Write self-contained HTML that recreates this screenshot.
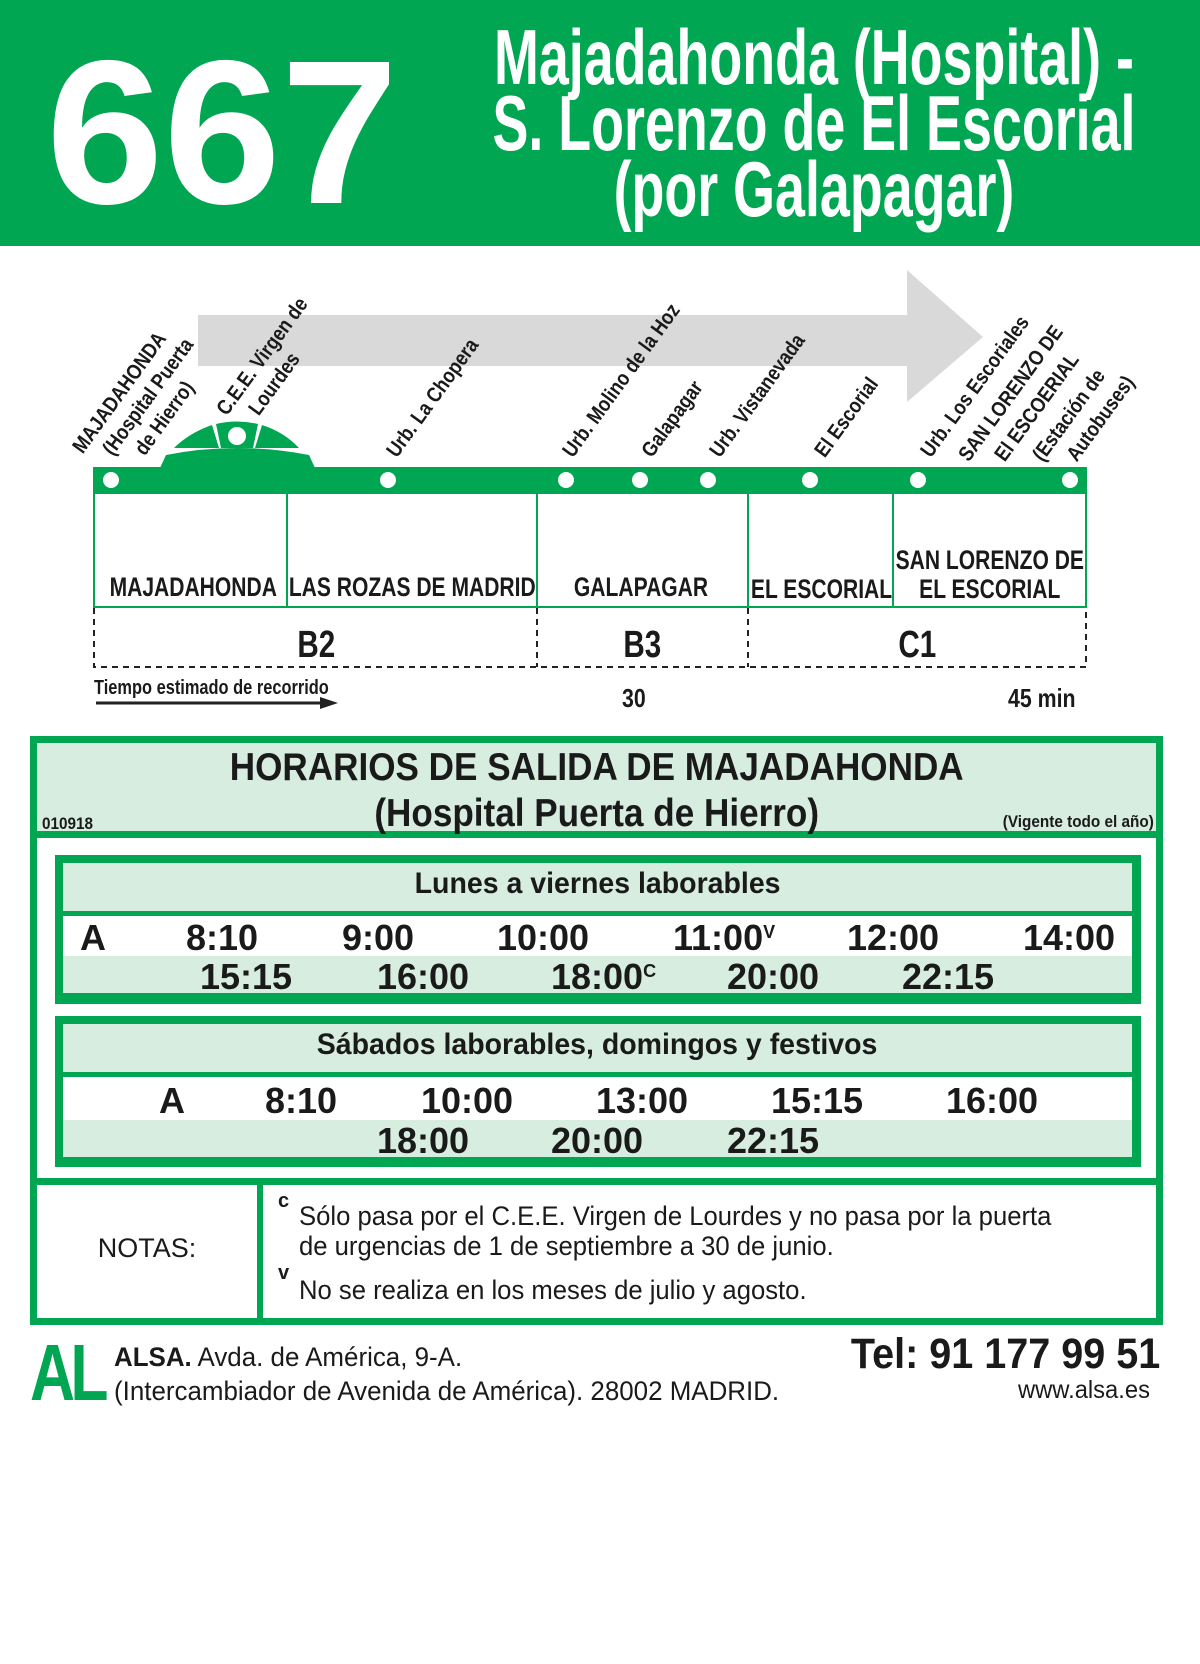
<!DOCTYPE html>
<html><head><meta charset="utf-8"><style>
*{margin:0;padding:0;box-sizing:border-box}
body{width:1200px;height:1664px;background:#fff;position:relative;overflow:hidden;font-family:"Liberation Sans",Arial,sans-serif;color:#1a1a1a}
.a{position:absolute;white-space:nowrap}
.c{display:inline-block;white-space:nowrap}
.lbl{position:absolute;font-weight:bold;font-size:21px;line-height:21px;height:21px;transform-origin:0 100%;transform:rotate(-54deg) scaleX(.86);white-space:nowrap;color:#1a1a1a}
.g{background:#00a651}
.lg{background:#d7ede0}
.t{position:absolute;font-weight:bold;font-size:36px;line-height:36px;white-space:nowrap}
.t sup{font-size:18px;position:relative;top:-6px;vertical-align:top}
.bx{position:absolute;font-weight:bold;font-size:27px;text-align:center;line-height:27px;white-space:nowrap;width:600px}
.bx span{display:inline-block;transform:scaleX(.78);white-space:nowrap}
</style></head><body>

<!-- Header -->
<div class="a g" style="left:0;top:0;width:1200px;height:246px"></div>
<div class="a" style="left:46px;top:30px;font-weight:bold;font-size:205px;line-height:205px;color:#fff"><span class="c" style="transform:scaleX(1.03);transform-origin:0 0">667</span></div>
<div class="a" style="left:-200px;top:24px;width:2028px;text-align:center;color:#fff;font-weight:bold;font-size:78px;line-height:66px">
<span class="c" style="transform:scaleX(.69);transform-origin:50% 50%">Majadahonda (Hospital) -<br>S. Lorenzo de El Escorial<br>(por Galapagar)</span></div>

<!-- Arrow / diagram -->
<svg class="a" style="left:0;top:0" width="1200" height="720">
<polygon points="198,315 907,315 907,270 983,337 907,402 907,366 198,366" fill="#d9d9d9"/>
<g fill="#00a651">
<path d="M160,468 L166,455 Q237,441 309,455 L315,468 Z"/>
<path d="M174,448 Q189,433 212,425 L219,448 Z"/>
<path d="M216,424 Q237,419 258,424 L253,448 L221,448 Z"/>
<path d="M262,425 Q284,432 299,448 L255,448 Z"/>
</g>
<circle cx="237" cy="436" r="9" fill="#fff"/>
<rect x="93" y="467" width="994" height="26" fill="#00a651"/>
<g fill="#fff">
<circle cx="111" cy="480" r="8"/><circle cx="388" cy="480" r="8"/><circle cx="566" cy="480" r="8"/><circle cx="640" cy="480" r="8"/><circle cx="708" cy="480" r="8"/><circle cx="810" cy="480" r="8"/><circle cx="918" cy="480" r="8"/><circle cx="1070" cy="480" r="8"/>
</g>
<rect x="94" y="493" width="992" height="114" fill="none" stroke="#00a651" stroke-width="2"/>
<g stroke="#00a651" stroke-width="2"><line x1="287" y1="493" x2="287" y2="607"/><line x1="537" y1="493" x2="537" y2="607"/><line x1="748" y1="493" x2="748" y2="607"/><line x1="893" y1="493" x2="893" y2="607"/></g>
<g stroke="#222" stroke-width="2" stroke-dasharray="6,5" fill="none">
<polyline points="94,608 94,667 1086,667 1086,608"/>
<line x1="537" y1="608" x2="537" y2="667"/><line x1="748" y1="608" x2="748" y2="667"/></g>
<line x1="96" y1="703" x2="322" y2="703" stroke="#222" stroke-width="3"/>
<polygon points="320,697 338,703 320,709" fill="#222"/>
</svg>

<!-- rotated labels -->
<div class="lbl" style="left:86px;top:436px">MAJADAHONDA</div>
<div class="lbl" style="left:116px;top:438px">(Hospital Puerta</div>
<div class="lbl" style="left:148px;top:438px">de Hierro)</div>
<div class="lbl" style="left:230px;top:398px">C.E.E. Virgen de</div>
<div class="lbl" style="left:262px;top:398px">Lourdes</div>
<div class="lbl" style="left:400px;top:440px">Urb. La Chopera</div>
<div class="lbl" style="left:576px;top:440px">Urb. Molino de la Hoz</div>
<div class="lbl" style="left:655px;top:440px">Galapagar</div>
<div class="lbl" style="left:723px;top:440px">Urb. Vistanevada</div>
<div class="lbl" style="left:828px;top:440px">El Escorial</div>
<div class="lbl" style="left:934px;top:440px">Urb. Los Escoriales</div>
<div class="lbl" style="left:972px;top:444px">SAN LORENZO DE</div>
<div class="lbl" style="left:1008px;top:444px">El ESCOERIAL</div>
<div class="lbl" style="left:1046px;top:444px">(Estación de</div>
<div class="lbl" style="left:1080px;top:444px">Autobuses)</div>

<!-- box labels -->
<div class="bx" style="left:-107px;top:574px"><span>MAJADAHONDA</span></div>
<div class="bx" style="left:112px;top:574px"><span>LAS ROZAS DE MADRID</span></div>
<div class="bx" style="left:341px;top:574px"><span>GALAPAGAR</span></div>
<div class="bx" style="left:522px;top:576px"><span>EL ESCORIAL</span></div>
<div class="bx" style="left:690px;top:546px;line-height:29px"><span>SAN LORENZO DE<br>EL ESCORIAL</span></div>
<div class="bx" style="left:16px;top:626px;font-size:38px;line-height:38px"><span>B2</span></div>
<div class="bx" style="left:342px;top:626px;font-size:38px;line-height:38px"><span>B3</span></div>
<div class="bx" style="left:617px;top:626px;font-size:38px;line-height:38px"><span>C1</span></div>
<div class="a" style="left:94px;top:677px;font-weight:bold;font-size:20px"><span class="c" style="transform:scaleX(.82);transform-origin:0 0">Tiempo estimado de recorrido</span></div>
<div class="a" style="left:622px;top:683px;font-weight:bold;font-size:26px"><span class="c" style="transform:scaleX(.82);transform-origin:0 0">30</span></div>
<div class="a" style="left:1008px;top:683px;font-weight:bold;font-size:26px"><span class="c" style="transform:scaleX(.82);transform-origin:0 0">45 min</span></div>

<!-- Schedule outer -->
<div class="a g" style="left:30px;top:736px;width:1133px;height:589px"></div>
<div class="a lg" style="left:37px;top:743px;width:1119px;height:88px"></div>
<div class="a" style="left:37px;top:838px;width:1119px;height:340px;background:#fff"></div>
<div class="a" style="left:37px;top:1185px;width:220px;height:133px;background:#fff"></div>
<div class="a" style="left:263px;top:1185px;width:893px;height:133px;background:#fff"></div>

<div class="a" style="left:37px;top:745px;width:1119px;text-align:center;font-weight:bold;font-size:39px;line-height:46px"><span class="c" style="transform:scaleX(.9)">HORARIOS DE SALIDA DE MAJADAHONDA<br>(Hospital Puerta de Hierro)</span></div>
<div class="a" style="left:42px;top:814px;font-weight:bold;font-size:17px"><span class="c" style="transform:scaleX(.9);transform-origin:0 0">010918</span></div>
<div class="a" style="right:46px;top:812px;font-weight:bold;font-size:17px"><span class="c" style="transform:scaleX(.9);transform-origin:100% 0">(Vigente todo el año)</span></div>

<!-- box 1 -->
<div class="a g" style="left:55px;top:855px;width:1086px;height:149px"></div>
<div class="a lg" style="left:63px;top:863px;width:1069px;height:48px"></div>
<div class="a" style="left:63px;top:916px;width:1069px;height:40px;background:#fff"></div>
<div class="a lg" style="left:63px;top:956px;width:1069px;height:37px"></div>
<div class="a" style="left:63px;top:867px;width:1069px;text-align:center;font-weight:bold;font-size:30px"><span class="c" style="transform:scaleX(.95)">Lunes a viernes laborables</span></div>
<div class="t" style="left:80px;top:920px">A</div>
<div class="t" style="left:186px;top:920px">8:10</div>
<div class="t" style="left:342px;top:920px">9:00</div>
<div class="t" style="left:497px;top:920px">10:00</div>
<div class="t" style="left:673px;top:920px">11:00<sup>V</sup></div>
<div class="t" style="left:847px;top:920px">12:00</div>
<div class="t" style="left:1023px;top:920px">14:00</div>
<div class="t" style="left:200px;top:959px">15:15</div>
<div class="t" style="left:377px;top:959px">16:00</div>
<div class="t" style="left:551px;top:959px">18:00<sup>C</sup></div>
<div class="t" style="left:727px;top:959px">20:00</div>
<div class="t" style="left:902px;top:959px">22:15</div>

<!-- box 2 -->
<div class="a g" style="left:55px;top:1016px;width:1086px;height:151px"></div>
<div class="a lg" style="left:63px;top:1024px;width:1069px;height:48px"></div>
<div class="a" style="left:63px;top:1077px;width:1069px;height:43px;background:#fff"></div>
<div class="a lg" style="left:63px;top:1120px;width:1069px;height:37px"></div>
<div class="a" style="left:63px;top:1028px;width:1069px;text-align:center;font-weight:bold;font-size:30px"><span class="c" style="transform:scaleX(.95)">Sábados laborables, domingos y festivos</span></div>
<div class="t" style="left:159px;top:1083px">A</div>
<div class="t" style="left:265px;top:1083px">8:10</div>
<div class="t" style="left:421px;top:1083px">10:00</div>
<div class="t" style="left:596px;top:1083px">13:00</div>
<div class="t" style="left:771px;top:1083px">15:15</div>
<div class="t" style="left:946px;top:1083px">16:00</div>
<div class="t" style="left:377px;top:1123px">18:00</div>
<div class="t" style="left:551px;top:1123px">20:00</div>
<div class="t" style="left:727px;top:1123px">22:15</div>

<!-- notes -->
<div class="a" style="left:37px;top:1233px;width:220px;text-align:center;font-size:27px">NOTAS:</div>
<div class="a" style="left:278px;top:1190px;font-weight:bold;font-size:20px">c</div>
<div class="a" style="left:278px;top:1262px;font-weight:bold;font-size:20px">v</div>
<div class="a" style="left:299px;top:1201px;font-size:27px;line-height:30px"><span class="c" style="transform:scaleX(.95);transform-origin:0 0">Sólo pasa por el C.E.E. Virgen de Lourdes y no pasa por la puerta<br>de urgencias de 1 de septiembre a 30 de junio.</span></div>
<div class="a" style="left:299px;top:1275px;font-size:27px"><span class="c" style="transform:scaleX(.95);transform-origin:0 0">No se realiza en los meses de julio y agosto.</span></div>

<!-- footer -->
<div class="a" style="left:30px;top:1333px;font-weight:bold;font-size:80px;line-height:80px;color:#00a651;letter-spacing:-6px"><span class="c" style="transform:scaleX(.78);transform-origin:0 0">AL</span></div>
<div class="a" style="left:114px;top:1340px;font-size:27px;line-height:34px"><span class="c" style="transform:scaleX(.96);transform-origin:0 0"><b>ALSA.</b> Avda. de América, 9-A.<br>(Intercambiador de Avenida de América). 28002 MADRID.</span></div>
<div class="a" style="right:40px;top:1330px;font-weight:bold;font-size:43px"><span class="c" style="transform:scaleX(.92);transform-origin:100% 0">Tel: 91 177 99 51</span></div>
<div class="a" style="right:50px;top:1376px;font-size:25px"><span class="c" style="transform:scaleX(.95);transform-origin:100% 0">www.alsa.es</span></div>
</body></html>
